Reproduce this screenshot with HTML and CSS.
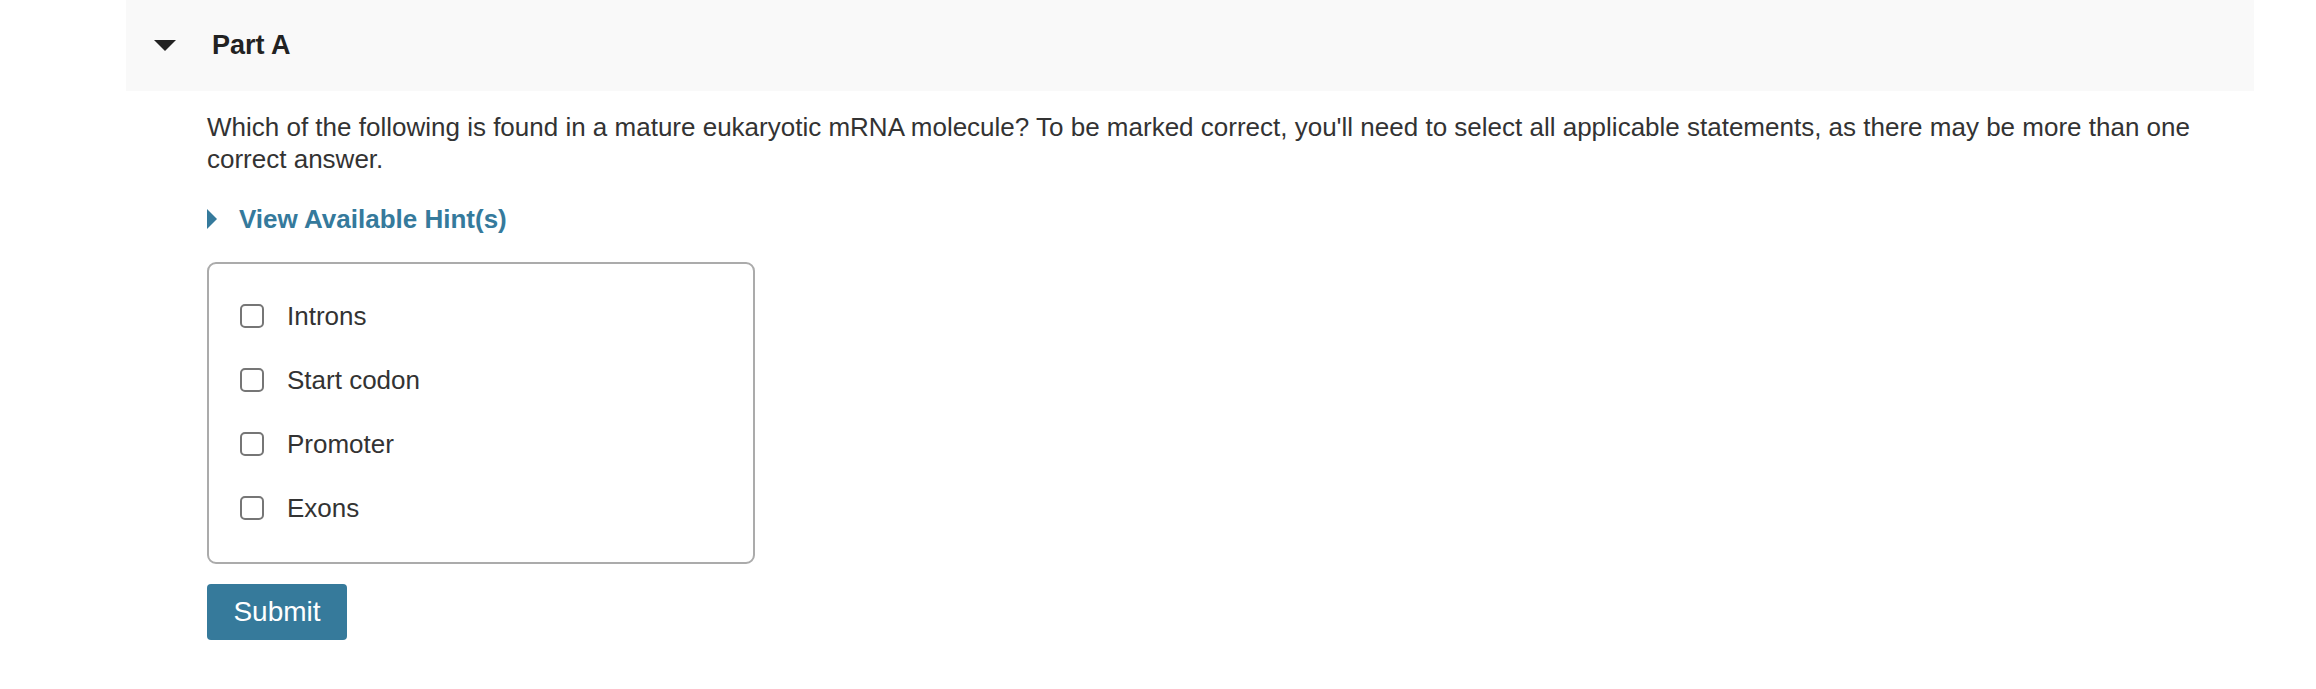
FILE: index.html
```html
<!DOCTYPE html>
<html>
<head>
  <title>Part A</title>
  <link rel="stylesheet" href="styles.css">
</head>
<body>
  <div class="part-header">
    <span class="caret-down"></span>
    <h2 class="part-title">Part A</h2>
  </div>

  <div class="part-body">
    <p class="question">Which of the following is found in a mature eukaryotic mRNA molecule? To be marked correct, you'll need to select all applicable statements, as there may be more than one correct answer.</p>

    <a class="hint-toggle" href="#">
      <span class="caret-right"></span>
      View Available Hint(s)
    </a>

    <form>
      <div class="choices">
        <label class="choice"><input type="checkbox" name="answer" value="introns"><span>Introns</span></label>
        <label class="choice"><input type="checkbox" name="answer" value="start"><span>Start codon</span></label>
        <label class="choice"><input type="checkbox" name="answer" value="promoter"><span>Promoter</span></label>
        <label class="choice"><input type="checkbox" name="answer" value="exons"><span>Exons</span></label>
      </div>
      <button type="submit" class="submit-btn">Submit</button>
    </form>
  </div>
</body>
</html>
```

FILE: styles.css
```css
body {
  font-family: "Liberation Sans", Arial, sans-serif;
  margin: 0;
  padding: 0;
  color: #333;
  background-color: #fff;
}

.part-header {
  display: flex;
  align-items: center;
  height: 91px;
  margin: 0 62px 0 126px;
  padding-left: 28px;
  background-color: #f9f9f9;
}

.caret-down {
  width: 0;
  height: 0;
  border-left: 11px solid transparent;
  border-right: 11px solid transparent;
  border-top: 11px solid #222;
}

.part-title {
  margin: 0 0 0 36px;
  font-size: 27px;
  font-weight: bold;
  color: #222;
}

.part-body {
  margin: 0 62px 0 207px;
}

.question {
  margin: 20px 0 0;
  font-size: 26px;
  line-height: 32px;
}

.hint-toggle {
  display: flex;
  align-items: center;
  margin-top: 28px;
  font-size: 26px;
  line-height: 32px;
  font-weight: bold;
  color: #357a9c;
  text-decoration: none;
}

.caret-right {
  width: 0;
  height: 0;
  margin-right: 22px;
  border-top: 10px solid transparent;
  border-bottom: 10px solid transparent;
  border-left: 10px solid #357a9c;
}

.choices {
  display: flex;
  flex-direction: column;
  gap: 32px;
  width: 548px;
  box-sizing: border-box;
  margin-top: 27px;
  padding: 36px 31px 38px;
  border: 2px solid #ababab;
  border-radius: 9px;
}

.choice {
  display: flex;
  align-items: center;
  height: 32px;
  font-size: 26px;
  line-height: 32px;
}

.choice input[type="checkbox"] {
  appearance: none;
  -webkit-appearance: none;
  width: 24px;
  height: 24px;
  margin: 0 23px 0 0;
  border: 2px solid #767676;
  border-radius: 5px;
  background-color: #fff;
}

.submit-btn {
  display: block;
  width: 140px;
  height: 56px;
  margin-top: 20px;
  padding: 0;
  border: none;
  border-radius: 4px;
  background-color: #367a9b;
  color: #fff;
  font-family: "Liberation Sans", Arial, sans-serif;
  font-size: 28px;
  cursor: pointer;
}
```
